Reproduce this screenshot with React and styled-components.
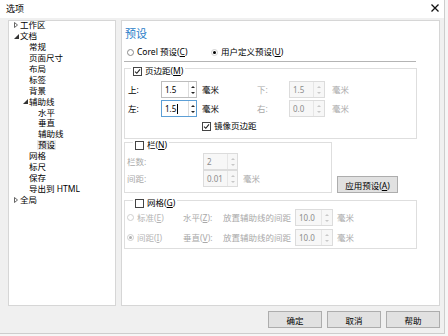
import React from "react";
import styled, { createGlobalStyle } from "styled-components";

const GlobalStyle = createGlobalStyle`
  html, body { margin: 0; padding: 0; background: #f6f6f6; }
  body {
    font-family: "Noto Sans", "Noto Sans CJK SC", "Liberation Sans", sans-serif;
    font-size: 9px;
    color: #000;
  }
  * { box-sizing: border-box; }
  u { text-decoration: underline; text-underline-offset: 1px; }
`;

const Window = styled.div`
  width: 445px;
  height: 334px;
  background: #f0f0f0;
  border-right: 1px solid #cdcdcd;
  border-bottom: 1px solid #cdcdcd;
  display: flex;
  flex-direction: column;
`;

const TitleBar = styled.div`
  height: 18px;
  background: #fff;
  display: flex;
  align-items: center;
  justify-content: space-between;
  padding: 0 5px 2px 6px;
  font-size: 9px;
`;

const Body = styled.div`
  display: flex;
  gap: 5px;
  padding: 2px 4px 0 8px;
  height: 288px;
`;

const TreePanel = styled.div`
  width: 108px;
  background: #fff;
  border: 1px solid #d6d6d6;
  overflow: hidden;
`;

const TreeList = styled.div`
  margin-top: -1px;
  display: flex;
  flex-direction: column;
`;

const TreeRow = styled.div`
  display: flex;
  align-items: center;
  height: 10.9px;
  padding-left: ${(p) => 5 + p.$level * 9}px;
  font-size: 8.5px;
  line-height: 10px;
  white-space: nowrap;
`;

const ArrowBox = styled.span`
  width: 6px;
  display: inline-flex;
  align-items: center;
`;

const TreeLabel = styled.span`
  background: ${(p) => (p.$selected ? "#e8e8e8" : "transparent")};
  padding: 0 1px;
  margin-left: -1px;
  line-height: 10px;
`;

const RightPanel = styled.div`
  flex: 1;
  background: #fff;
  border: 1px solid #d6d6d6;
  padding: 5px 0 0 2px;
  display: flex;
  flex-direction: column;
`;

const Heading = styled.div`
  font-size: 11px;
  line-height: 16px;
  color: #1f7cc8;
  padding-left: 1px;
`;

const RadioRow = styled.div`
  display: flex;
  align-items: center;
  height: 12px;
  margin-top: 4px;
  padding-left: 3px;
`;

const RadioOption = styled.label`
  display: flex;
  align-items: center;
  gap: 3px;
  width: ${(p) => (p.$w ? `${p.$w}px` : "auto")};
  color: ${(p) => (p.$disabled ? "#b5b5b5" : "#000")};
  font-size: 8.5px;
  line-height: 12px;
  white-space: nowrap;
`;

const RadioCircle = styled.span`
  width: 7px;
  height: 7px;
  border-radius: 50%;
  border: 1px solid ${(p) => (p.$disabled ? "#cfcfcf" : p.$on ? "#d0d0d0" : "#8a8a8a")};
  display: inline-flex;
  align-items: center;
  justify-content: center;
  flex-shrink: 0;
  &::after {
    content: "";
    width: 3px;
    height: 3px;
    border-radius: 50%;
    background: ${(p) => (p.$on ? (p.$disabled ? "#b0b0b0" : "#000") : "transparent")};
  }
`;

const Rule = styled.div`
  width: 292px;
  border-top: 1px solid #b4b4b4;
  margin-top: 3px;
`;

const Group = styled.div`
  width: ${(p) => p.$w}px;
  border: 1px solid #dedede;
  margin-top: ${(p) => p.$mt || 0}px;
  padding-bottom: ${(p) => p.$pb || 0}px;
`;

const Legend = styled.div`
  display: flex;
  align-items: center;
  gap: 3px;
  width: fit-content;
  height: 12px;
  margin: -4px 0 0 ${(p) => p.$ml}px;
  padding: 0 2px;
  background: #fff;
  font-size: 8.5px;
  line-height: 12px;
  white-space: nowrap;
`;

const Box = styled.span`
  width: 9px;
  height: 9px;
  border: 1px solid #444;
  background: #fff;
  display: inline-flex;
  align-items: center;
  justify-content: center;
  flex-shrink: 0;
`;

const FieldGrid = styled.div`
  display: grid;
  grid-template-columns: ${(p) => p.$cols};
  grid-auto-rows: 17px;
  row-gap: ${(p) => p.$gap || 0}px;
  align-items: center;
  padding-left: ${(p) => p.$pl}px;
  margin-top: ${(p) => p.$mt || 0}px;
`;

const Label = styled.span`
  color: ${(p) => (p.$dim ? "#a9a9a9" : "#000")};
  font-size: 8.5px;
  line-height: 12px;
  white-space: nowrap;
`;

const Unit = styled.span`
  padding-left: ${(p) => p.$pl}px;
  color: ${(p) => (p.$dim ? "#a9a9a9" : "#000")};
  font-size: 8.5px;
  line-height: 12px;
  white-space: nowrap;
`;

const MirrorCell = styled.div`
  grid-column: 3 / span 4;
  display: flex;
  align-items: center;
  gap: 3px;
  padding-left: 5px;
  height: 14px;
  align-self: start;
  font-size: 8.5px;
  line-height: 12px;
`;

const SpinBox = styled.div`
  display: flex;
  width: ${(p) => p.$w}px;
  height: 17px;
  border: 1px solid ${(p) => (p.$focus ? "#5c9fd6" : p.$disabled ? "#dcdcdc" : "#bdbdbd")};
  background: ${(p) => (p.$disabled ? "#f7f7f7" : "#fff")};
`;

const SpinText = styled.div`
  flex: 1;
  display: flex;
  align-items: center;
  padding-left: 3px;
  font-size: 8px;
  color: ${(p) => (p.$disabled ? "#8c8c8c" : "#000")};
`;

const Caret = styled.span`
  width: 1px;
  height: 10px;
  background: #000;
  margin-left: 1px;
`;

const SpinButtons = styled.div`
  width: ${(p) => p.$sw}px;
  border-left: 1px solid ${(p) => (p.$disabled ? "#e6e6e6" : "#dcdcdc")};
  display: flex;
  flex-direction: column;
  align-items: center;
  justify-content: center;
  gap: 4px;
`;

const MiddleRow = styled.div`
  display: flex;
  align-items: flex-end;
  gap: 5px;
  margin-top: 3px;
`;

const Button = styled.button`
  width: ${(p) => p.$w}px;
  height: 17px;
  background: #e1e1e1;
  border: 1px solid #adadad;
  border-radius: 0;
  font-family: inherit;
  font-size: 8.5px;
  color: #000;
  padding: 0;
  display: flex;
  align-items: center;
  justify-content: center;
`;

const Footer = styled.div`
  display: flex;
  justify-content: flex-end;
  gap: 5px;
  padding: 5px 4px 0 0;
`;

const Check = () => (
  <svg width="7" height="7" viewBox="0 0 7 7">
    <path d="M1 3.6 L2.8 5.3 L6 1.4" fill="none" stroke="#222" strokeWidth="1.1" />
  </svg>
);

const Checkbox = ({ checked }) => <Box>{checked && <Check />}</Box>;

const Tri = ({ up, dim }) => (
  <svg width="4" height="2" viewBox="0 0 4 2">
    <path d={up ? "M0 2 L2 0 L4 2 Z" : "M0 0 L4 0 L2 2 Z"} fill={dim ? "#c8c8c8" : "#222"} />
  </svg>
);

const Spin = ({ value, w, sw, disabled, focus }) => (
  <SpinBox $w={w} $disabled={disabled} $focus={focus}>
    <SpinText $disabled={disabled}>
      {value}
      {focus && <Caret />}
    </SpinText>
    <SpinButtons $sw={sw} $disabled={disabled}>
      <Tri up dim={disabled} />
      <Tri dim={disabled} />
    </SpinButtons>
  </SpinBox>
);

const TreeArrow = ({ kind }) => {
  if (kind === "closed")
    return (
      <svg width="4" height="6" viewBox="0 0 4 6">
        <path d="M0.5 0.5 L3.5 3 L0.5 5.5 Z" fill="none" stroke="#555" strokeWidth="0.9" />
      </svg>
    );
  if (kind === "open")
    return (
      <svg width="5" height="5" viewBox="0 0 5 5">
        <path d="M5 0 L5 5 L0 5 Z" fill="#333" />
      </svg>
    );
  return null;
};

const tree = [
  { label: "工作区", level: 0, arrow: "closed" },
  { label: "文档", level: 0, arrow: "open" },
  { label: "常规", level: 1 },
  { label: "页面尺寸", level: 1 },
  { label: "布局", level: 1 },
  { label: "标签", level: 1 },
  { label: "背景", level: 1 },
  { label: "辅助线", level: 1, arrow: "open" },
  { label: "水平", level: 2 },
  { label: "垂直", level: 2 },
  { label: "辅助线", level: 2 },
  { label: "预设", level: 2, selected: true },
  { label: "网格", level: 1 },
  { label: "标尺", level: 1 },
  { label: "保存", level: 1 },
  { label: "导出到 HTML", level: 1 },
  { label: "全局", level: 0, arrow: "closed" },
];

export default function App() {
  return (
    <>
      <GlobalStyle />
      <Window>
        <TitleBar>
          <span>选项</span>
          <svg width="8" height="8" viewBox="0 0 8 8">
            <path d="M0.5 0.5 L7.5 7.5 M7.5 0.5 L0.5 7.5" stroke="#111" strokeWidth="1.3" />
          </svg>
        </TitleBar>
        <Body>
          <TreePanel>
            <TreeList>
              {tree.map((t, i) => (
                <TreeRow key={i} $level={t.level}>
                  <ArrowBox>
                    <TreeArrow kind={t.arrow} />
                  </ArrowBox>
                  <TreeLabel $selected={t.selected}>{t.label}</TreeLabel>
                </TreeRow>
              ))}
            </TreeList>
          </TreePanel>
          <RightPanel>
            <Heading>预设</Heading>
            <RadioRow>
              <RadioOption $w={84}>
                <RadioCircle />
                <span>Corel 预设(<u>C</u>)</span>
              </RadioOption>
              <RadioOption>
                <RadioCircle $on />
                <span>用户定义预设(<u>U</u>)</span>
              </RadioOption>
            </RadioRow>
            <Rule />
            <Group $w={293} $mt={6} $pb={2}>
              <Legend $ml={6}>
                <Checkbox checked />
                <span>页边距(<u>M</u>)</span>
              </Legend>
              <FieldGrid $cols="33px 36px 60px 32px 36px auto" $pl={3} $mt={4} $gap={2}>
                <Label>上:</Label>
                <Spin value="1.5" w={36} sw={8} />
                <Unit $pl={5}>毫米</Unit>
                <Label $dim>下:</Label>
                <Spin value="1.5" w={36} sw={11} disabled />
                <Unit $pl={7} $dim>毫米</Unit>
                <Label>左:</Label>
                <Spin value="1.5" w={36} sw={8} focus />
                <Unit $pl={5}>毫米</Unit>
                <Label $dim>右:</Label>
                <Spin value="0.0" w={36} sw={11} disabled />
                <Unit $pl={7} $dim>毫米</Unit>
                <MirrorCell>
                  <Checkbox checked />
                  <span>镜像页边距</span>
                </MirrorCell>
              </FieldGrid>
            </Group>
            <MiddleRow>
              <Group $w={208} $pb={5}>
                <Legend $ml={8}>
                  <Checkbox />
                  <span>栏(<u>N</u>)</span>
                </Legend>
                <FieldGrid $cols="76px 35px auto" $pl={2} $mt={2}>
                  <Label $dim>栏数:</Label>
                  <Spin value="2" w={35} sw={10} disabled />
                  <span />
                  <Label $dim>间距:</Label>
                  <Spin value="0.01" w={35} sw={10} disabled />
                  <Unit $pl={5} $dim>毫米</Unit>
                </FieldGrid>
              </Group>
              <Button $w={61}>
                <span>应用预设(<u>A</u>)</span>
              </Button>
            </MiddleRow>
            <Group $w={293} $mt={7} $pb={2}>
              <Legend $ml={8}>
                <Checkbox />
                <span>网格(<u>G</u>)</span>
              </Legend>
              <FieldGrid $cols="56px 40px 72px 38px auto" $pl={2} $gap={3}>
                <RadioOption $disabled>
                  <RadioCircle $disabled />
                  <span>标准(<u>E</u>)</span>
                </RadioOption>
                <Label $dim>水平(<u>Z</u>):</Label>
                <Label $dim>放置辅助线的间距</Label>
                <Spin value="10.0" w={38} sw={11} disabled />
                <Unit $pl={4} $dim>毫米</Unit>
                <RadioOption $disabled>
                  <RadioCircle $disabled $on />
                  <span>间距(<u>I</u>)</span>
                </RadioOption>
                <Label $dim>垂直(<u>V</u>):</Label>
                <Label $dim>放置辅助线的间距</Label>
                <Spin value="10.0" w={38} sw={11} disabled />
                <Unit $pl={4} $dim>毫米</Unit>
              </FieldGrid>
            </Group>
          </RightPanel>
        </Body>
        <Footer>
          <Button $w={54}>确定</Button>
          <Button $w={54}>取消</Button>
          <Button $w={54}>帮助</Button>
        </Footer>
      </Window>
    </>
  );
}
